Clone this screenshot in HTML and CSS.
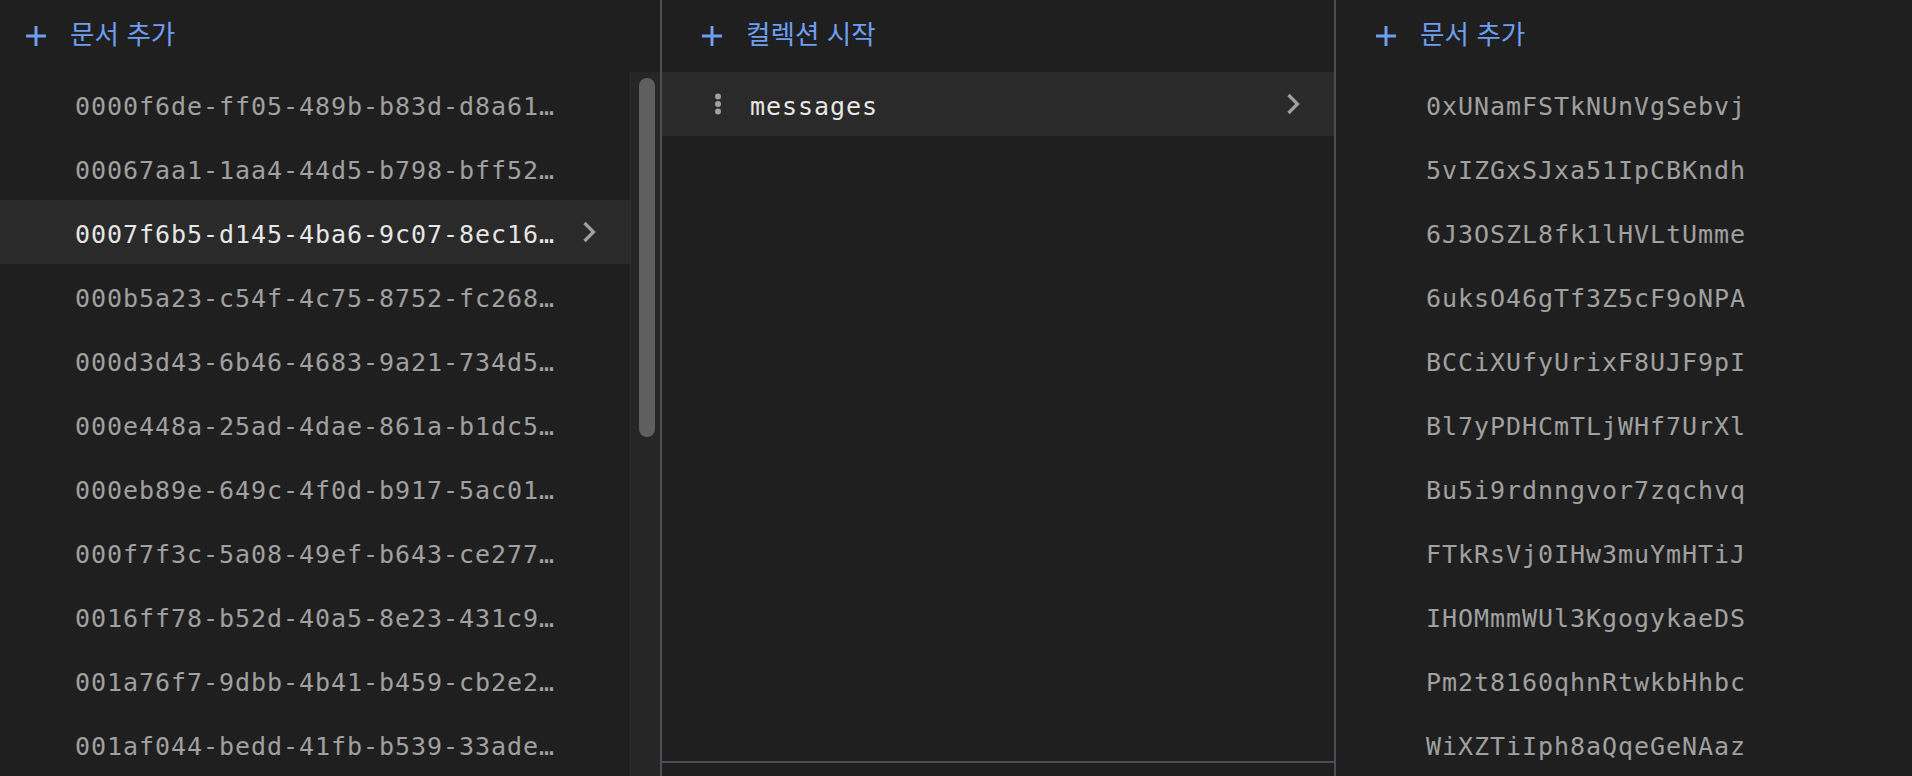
FILE: index.html
```html
<!DOCTYPE html>
<html lang="ko">
<head>
<meta charset="utf-8">
<title>Firestore</title>
<link rel="stylesheet" href="styles.css">
</head>
<body>
<div class="app">
  <section class="panel panel-docs">
    <div class="header header-left">
      <svg class="plus" viewBox="0 0 22 22"><path d="M11 1v20M1 11h20"/></svg>
      <span class="header-label">문서 추가</span>
    </div>
    <div class="list-wrap">
      <ul class="list list-left">
        <li class="row"><span class="id">0000f6de-ff05-489b-b83d-d8a61…</span></li>
        <li class="row"><span class="id">00067aa1-1aa4-44d5-b798-bff52…</span></li>
        <li class="row selected"><span class="id">0007f6b5-d145-4ba6-9c07-8ec16…</span><svg class="chev" viewBox="0 0 15 22"><path d="M2.5 2l9 9-9 9"/></svg></li>
        <li class="row"><span class="id">000b5a23-c54f-4c75-8752-fc268…</span></li>
        <li class="row"><span class="id">000d3d43-6b46-4683-9a21-734d5…</span></li>
        <li class="row"><span class="id">000e448a-25ad-4dae-861a-b1dc5…</span></li>
        <li class="row"><span class="id">000eb89e-649c-4f0d-b917-5ac01…</span></li>
        <li class="row"><span class="id">000f7f3c-5a08-49ef-b643-ce277…</span></li>
        <li class="row"><span class="id">0016ff78-b52d-40a5-8e23-431c9…</span></li>
        <li class="row"><span class="id">001a76f7-9dbb-4b41-b459-cb2e2…</span></li>
        <li class="row"><span class="id">001af044-bedd-41fb-b539-33ade…</span></li>
      </ul>
      <div class="scrolltrack"><div class="thumb"></div></div>
    </div>
  </section>

  <section class="panel panel-cols">
    <div class="cols-inner">
      <div class="header header-mid">
        <svg class="plus" viewBox="0 0 22 22"><path d="M11 1v20M1 11h20"/></svg>
        <span class="header-label">컬렉션 시작</span>
      </div>
      <ul class="list">
        <li class="row row-mid selected">
          <svg class="dots" viewBox="0 0 6 22"><circle cx="3" cy="3.5" r="3"/><circle cx="3" cy="11" r="3"/><circle cx="3" cy="18.5" r="3"/></svg>
          <span class="id">messages</span>
          <svg class="chev" viewBox="0 0 15 22"><path d="M2.5 2l9 9-9 9"/></svg>
        </li>
      </ul>
    </div>
  </section>

  <section class="panel panel-right">
    <div class="header header-mid">
      <svg class="plus" viewBox="0 0 22 22"><path d="M11 1v20M1 11h20"/></svg>
      <span class="header-label">문서 추가</span>
    </div>
    <ul class="list list-right">
      <li class="row"><span class="id">0xUNamFSTkNUnVgSebvj</span></li>
      <li class="row"><span class="id">5vIZGxSJxa51IpCBKndh</span></li>
      <li class="row"><span class="id">6J3OSZL8fk1lHVLtUmme</span></li>
      <li class="row"><span class="id">6uksO46gTf3Z5cF9oNPA</span></li>
      <li class="row"><span class="id">BCCiXUfyUrixF8UJF9pI</span></li>
      <li class="row"><span class="id">Bl7yPDHCmTLjWHf7UrXl</span></li>
      <li class="row"><span class="id">Bu5i9rdnngvor7zqchvq</span></li>
      <li class="row"><span class="id">FTkRsVj0IHw3muYmHTiJ</span></li>
      <li class="row"><span class="id">IHOMmmWUl3KgogykaeDS</span></li>
      <li class="row"><span class="id">Pm2t8160qhnRtwkbHhbc</span></li>
      <li class="row"><span class="id">WiXZTiIph8aQqeGeNAaz</span></li>
    </ul>
  </section>
</div>
</body>
</html>
```

FILE: styles.css
```css
* { box-sizing: border-box; }

html, body {
  margin: 0;
  padding: 0;
  height: 776px;
  overflow: hidden;
  background: #1f1f1f;
}

.app {
  display: flex;
  height: 776px;
  font-family: "Noto Sans CJK KR", "Noto Sans", sans-serif;
}

.panel {
  display: flex;
  flex-direction: column;
  height: 100%;
  overflow: hidden;
}

.panel-docs {
  width: 660px;
  flex: none;
}

.panel-cols {
  width: 676px;
  flex: none;
  border-left: 2px solid #4a4e57;
  border-right: 2px solid #4a4e57;
}

.cols-inner {
  height: 763px;
  border-bottom: 2px solid #4a4e57;
  display: flex;
  flex-direction: column;
}

.panel-right {
  flex: 1;
}

.header {
  height: 72px;
  flex: none;
  display: flex;
  align-items: center;
}

.header-left { padding-left: 25px; }
.header-mid { padding-left: 39px; }

.plus {
  width: 22px;
  height: 22px;
  flex: none;
}
.plus path {
  stroke: #6d9eef;
  stroke-width: 3;
  fill: none;
}

.header-label {
  color: #6d9eef;
  font-size: 26.6px;
  margin-left: 23px;
  line-height: 1;
  position: relative;
  top: -3px;
}

.list-wrap {
  flex: 1;
  display: flex;
  min-height: 0;
}

.list {
  list-style: none;
  margin: 0;
  padding: 0;
}

.list-left {
  flex: 1;
}

.row {
  height: 64px;
  display: flex;
  align-items: center;
  padding-right: 33px;
}

.list-left .row { padding-left: 75px; }
.list-right .row { padding-left: 90px; }

.row.selected {
  background: #2a2a2a;
}

.id {
  flex: 1;
  font-family: "DejaVu Sans Mono", "Liberation Mono", monospace;
  font-size: 25px;
  letter-spacing: 0.95px;
  color: #a0a0a0;
  white-space: nowrap;
  position: relative;
  top: 2px;
}

.selected .id {
  color: #e6e6e6;
}

.chev {
  width: 15px;
  height: 22px;
  flex: none;
}
.chev path {
  stroke: #a0a0a0;
  stroke-width: 3.2;
  fill: none;
}

.row-mid {
  padding-left: 53px;
}
.row-mid .id {
  margin-left: 29px;
}

.dots {
  width: 6px;
  height: 22px;
  flex: none;
  fill: #a0a0a0;
}

.scrolltrack {
  width: 30px;
  flex: none;
  background: #262626;
  border-left: 1px solid #2f2f2f;
  padding: 6px 0 0 8px;
}

.thumb {
  width: 16px;
  height: 359px;
  border-radius: 8px;
  background: #5f5f5f;
}
```
